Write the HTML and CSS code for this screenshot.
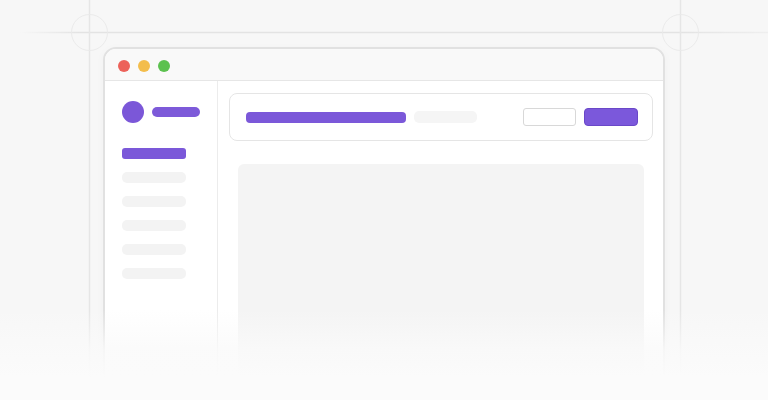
FILE: index.html
```html
<!DOCTYPE html>
<html lang="en">
<head>
<meta charset="utf-8">
<title>App preview</title>
<link rel="stylesheet" href="styles.css">
</head>
<body>
<div class="stage">
  <svg class="guides" width="768" height="400" viewBox="0 0 768 400" aria-hidden="true">
    <defs>
      <linearGradient id="hfade" gradientUnits="userSpaceOnUse" x1="20" y1="0" x2="768" y2="0">
        <stop offset="0" stop-color="#e3e3e3" stop-opacity="0"/>
        <stop offset="0.08" stop-color="#e3e3e3" stop-opacity="1"/>
        <stop offset="0.88" stop-color="#e3e3e3" stop-opacity="1"/>
        <stop offset="1" stop-color="#e3e3e3" stop-opacity="0.4"/>
      </linearGradient>
    </defs>
    <line x1="20" y1="32.5" x2="768" y2="32.5" stroke="url(#hfade)" stroke-width="1.5"/>
    <line x1="89.5" y1="0" x2="89.5" y2="400" stroke="#e6e6e6" stroke-width="1.5"/>
    <line x1="680.5" y1="0" x2="680.5" y2="400" stroke="#e6e6e6" stroke-width="1.5"/>
    <circle cx="89.5" cy="32.5" r="18" fill="none" stroke="#ebebeb" stroke-width="1"/>
    <circle cx="680.5" cy="32.5" r="18" fill="none" stroke="#ebebeb" stroke-width="1"/>
  </svg>

  <div class="window">
    <div class="titlebar">
      <span class="dot red"></span>
      <span class="dot yellow"></span>
      <span class="dot green"></span>
    </div>
    <div class="body">
      <aside class="sidebar">
        <div class="brand">
          <span class="avatar"></span>
          <span class="brand-bar"></span>
        </div>
        <nav class="nav">
          <span class="nav-item active"></span>
          <span class="nav-item"></span>
          <span class="nav-item"></span>
          <span class="nav-item"></span>
          <span class="nav-item"></span>
          <span class="nav-item"></span>
        </nav>
      </aside>
      <main class="main">
        <div class="header-card">
          <span class="title-bar"></span>
          <span class="sub-bar"></span>
          <span class="spacer"></span>
          <span class="btn btn-outline"></span>
          <span class="btn btn-primary"></span>
        </div>
        <div class="panel"></div>
      </main>
    </div>
  </div>

  <div class="fade"></div>
</div>
</body>
</html>
```

FILE: styles.css
```css
html, body {
  margin: 0;
  padding: 0;
  background: #f7f7f7;
  font-family: "Liberation Sans", Arial, sans-serif;
}

.stage {
  position: relative;
  width: 768px;
  height: 400px;
  overflow: hidden;
  background: #f7f7f7;
}

.guides {
  position: absolute;
  left: 0;
  top: 0;
  pointer-events: none;
}

.window {
  position: relative;
  margin: 47px 0 0 103px;
  width: 562px;
  height: 380px;
  box-sizing: border-box;
  border: 2px solid #e1e1e1;
  border-radius: 13px;
  background: #ffffff;
  box-shadow: 0 2px 10px rgba(0, 0, 0, 0.03);
  overflow: hidden;
}

.titlebar {
  display: flex;
  align-items: center;
  gap: 8px;
  height: 32px;
  box-sizing: border-box;
  padding: 3px 0 0 13px;
  background: #f9f9f9;
  border-bottom: 1.5px solid #e6e6e6;
}

.dot {
  width: 12px;
  height: 12px;
  border-radius: 50%;
}
.dot.red { background: #ec625a; }
.dot.yellow { background: #f3bd4c; }
.dot.green { background: #5cc14f; }

.body {
  display: flex;
  height: 100%;
}

.sidebar {
  width: 113px;
  flex: none;
  box-sizing: border-box;
  padding: 20px 0 0 17px;
  border-right: 1.5px solid #ececec;
  background: #ffffff;
}

.brand {
  display: flex;
  align-items: center;
  gap: 8px;
}

.avatar {
  width: 22px;
  height: 22px;
  border-radius: 50%;
  background: #7b57d8;
}

.brand-bar {
  width: 48px;
  height: 10px;
  border-radius: 5px;
  background: #7d5ad9;
}

.nav {
  display: flex;
  flex-direction: column;
  gap: 13px;
  margin-top: 25px;
}

.nav-item {
  width: 64px;
  height: 11px;
  border-radius: 5px;
  background: #f3f3f3;
}

.nav-item.active {
  border-radius: 3px;
  background: #7b58d9;
}

.main {
  flex: 1;
  box-sizing: border-box;
  padding: 12px 10px 0 11px;
}

.header-card {
  display: flex;
  align-items: center;
  height: 48px;
  box-sizing: border-box;
  padding: 0 14px 0 16px;
  border: 1.5px solid #e5e5e5;
  border-radius: 8px;
  background: #ffffff;
}

.title-bar {
  width: 160px;
  height: 11px;
  border-radius: 4px;
  background: #7b58d9;
}

.sub-bar {
  width: 63px;
  height: 12px;
  margin-left: 8px;
  border-radius: 5px;
  background: #f5f5f5;
}

.spacer {
  flex: 1;
}

.btn {
  height: 18px;
  box-sizing: border-box;
  border-radius: 3px;
}

.btn-outline {
  width: 53px;
  border: 1px solid #d8d8d8;
  background: #ffffff;
}

.btn-primary {
  width: 54px;
  margin-left: 8px;
  border: 1px solid #6a48c8;
  border-radius: 4px;
  background: #7b58db;
}

.panel {
  margin: 23px 9px 0 9px;
  height: 260px;
  border-radius: 6px;
  background: #f4f4f4;
}

.fade {
  position: absolute;
  left: 0;
  right: 0;
  bottom: 0;
  height: 90px;
  background: linear-gradient(to bottom,
    rgba(250, 250, 250, 0) 0%,
    rgba(250, 250, 250, 0.85) 45%,
    rgba(251, 251, 251, 1) 75%);
  pointer-events: none;
}
```
